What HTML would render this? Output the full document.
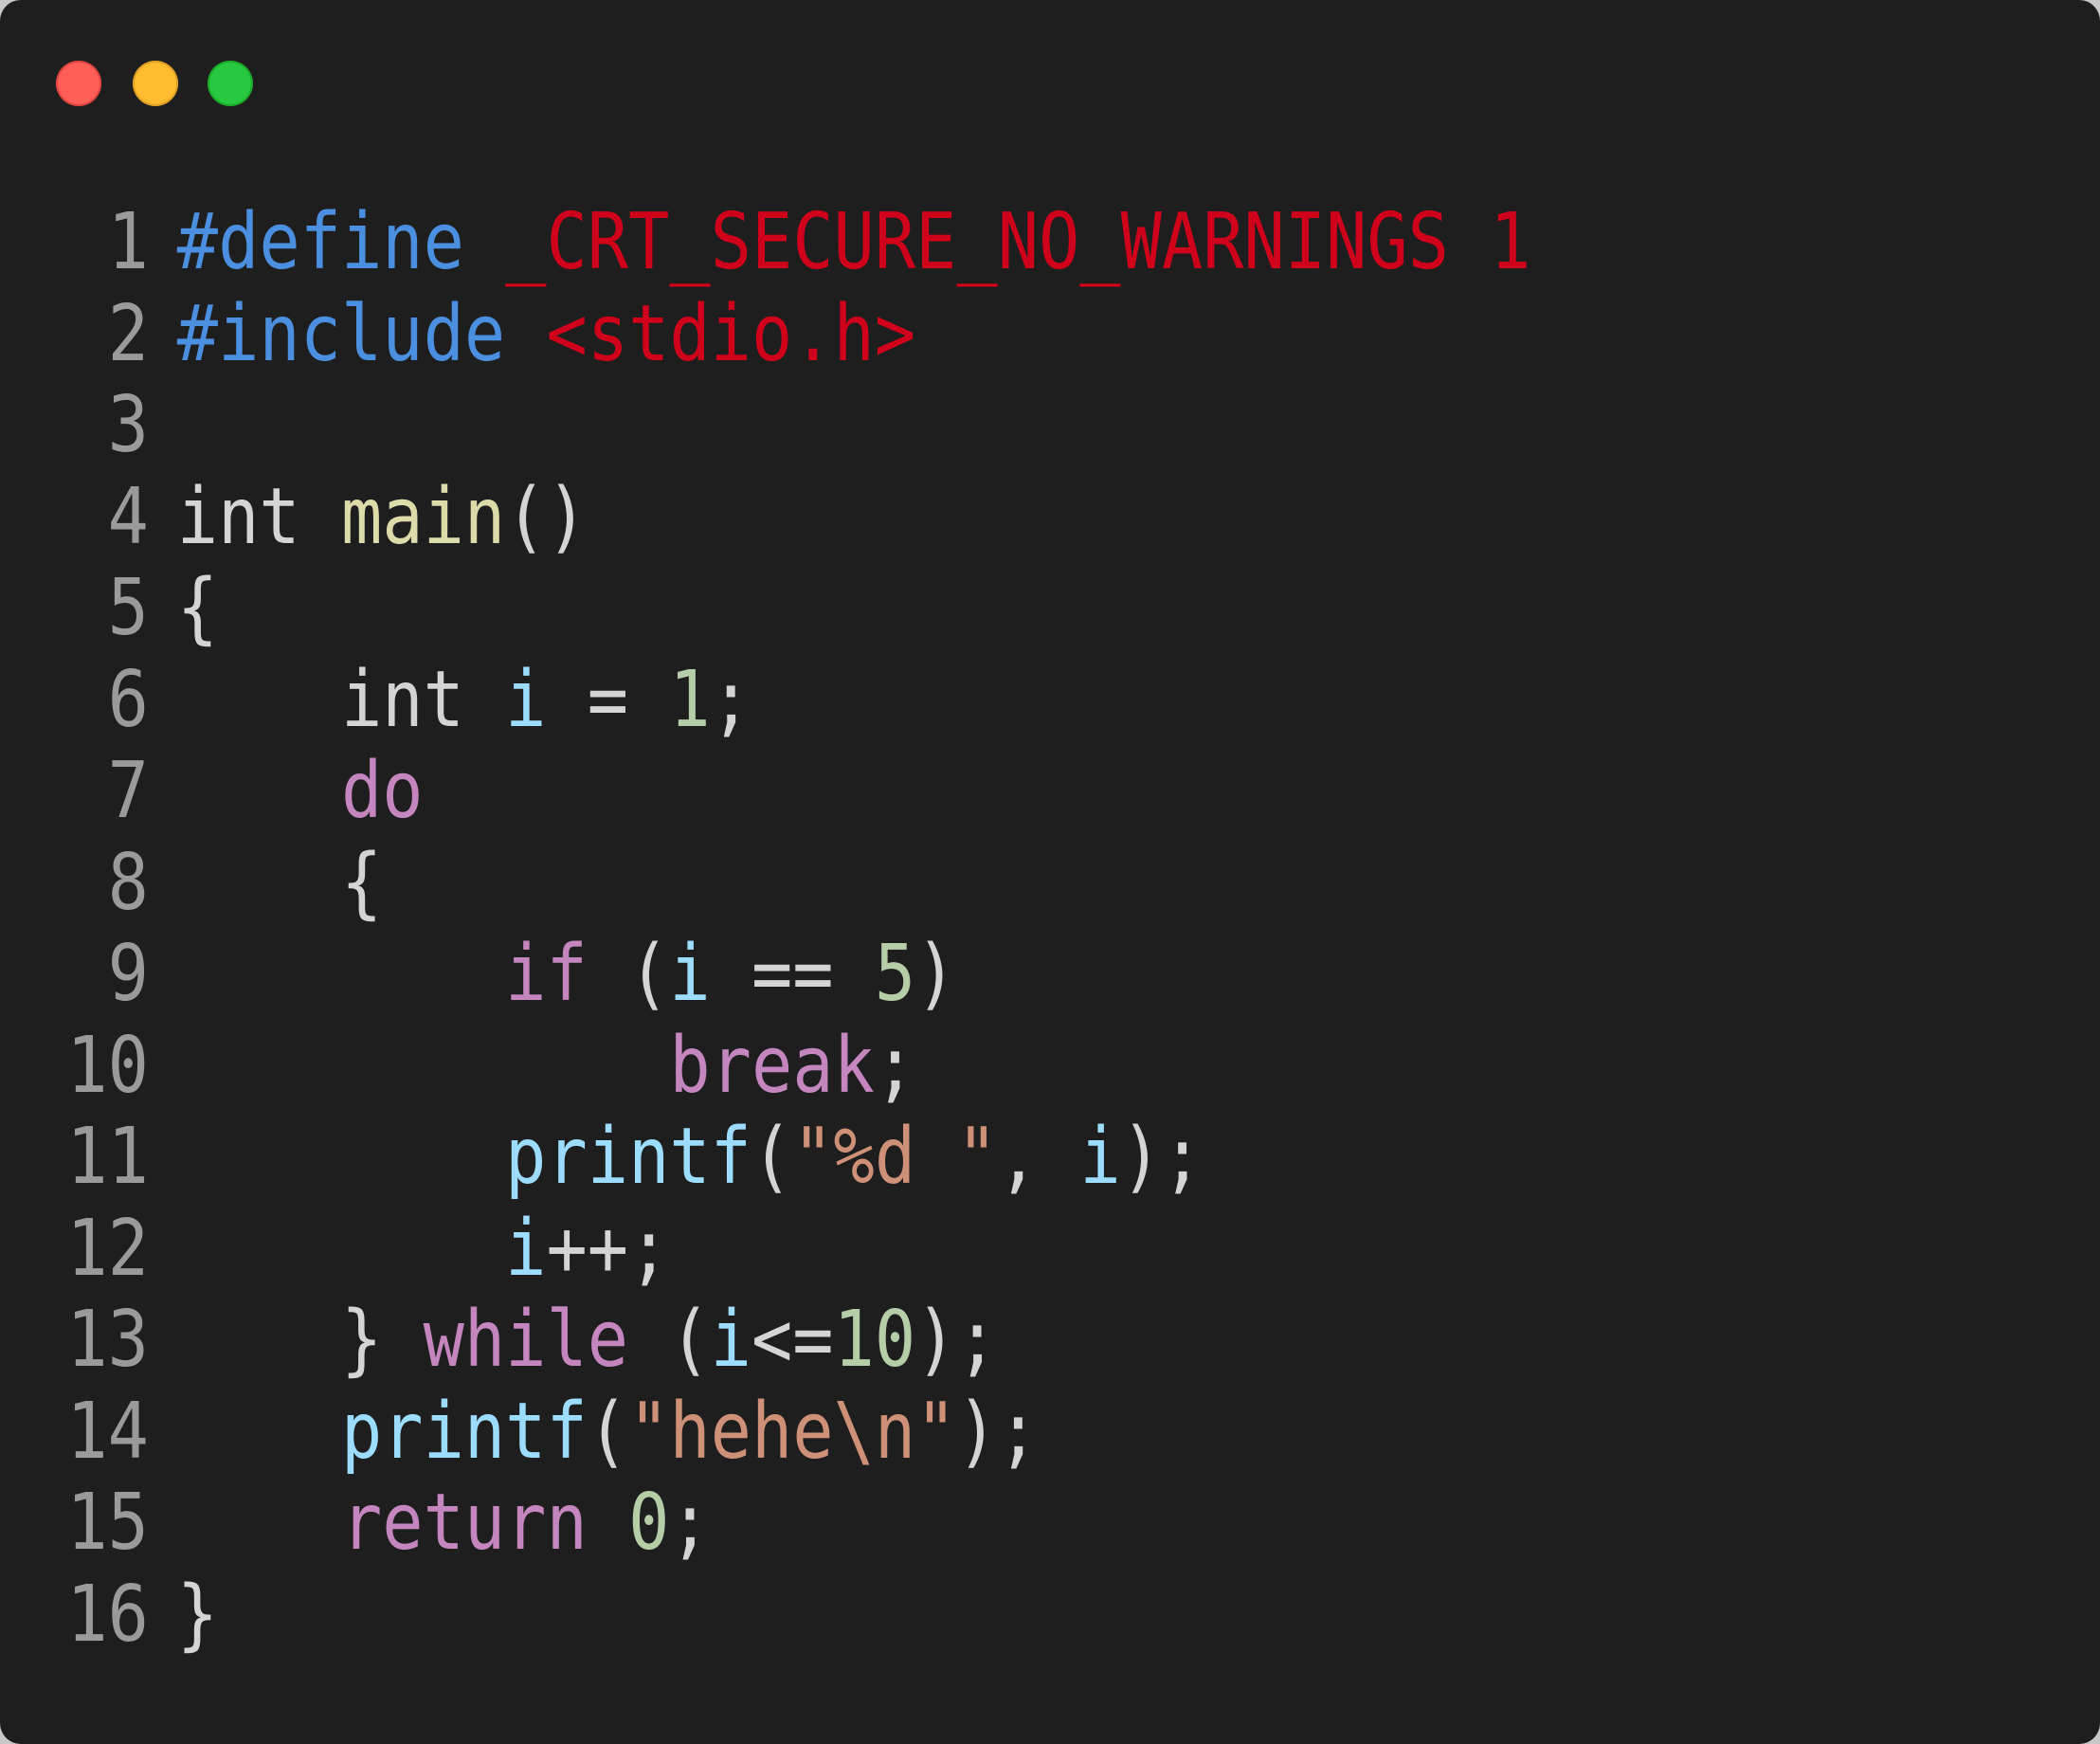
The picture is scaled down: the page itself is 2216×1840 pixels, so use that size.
<!DOCTYPE html>
<html><head><meta charset="utf-8"><style>
html,body{margin:0;padding:0;width:2216px;height:1840px;background:#c8c8c8;overflow:hidden}
.card{position:absolute;left:0;top:0;width:2216px;height:1840px;background:#1e1e1e;border-radius:22px}
.dot{position:absolute;top:64px;width:48px;height:48px;border-radius:50%}
.code{position:absolute;left:0;top:208px;transform:scaleX(0.877);transform-origin:0 0;font-family:"DejaVu Sans Mono","Liberation Mono",monospace;font-size:82px;line-height:96.5px;white-space:pre;color:#d4d4d4}
.ln{display:inline-block;width:179px;text-align:right;color:#9a9a9a;margin-right:34px}
.b{color:#4a8fe0}.r{color:#d0021b}.y{color:#dcdcaa}.c{color:#9cdcfe}.g{color:#b5cea8}.p{color:#c586c0}.s{color:#ce9178}
</style></head><body>
<div class="card">
<div class="dot" style="left:59px;background:#ff5f57;box-shadow:inset 0 0 0 2px #e0443e"></div>
<div class="dot" style="left:140px;background:#febc2e;box-shadow:inset 0 0 0 2px #dea123"></div>
<div class="dot" style="left:219px;background:#28c840;box-shadow:inset 0 0 0 2px #1aab29"></div>
<div class="code"><div><span class="ln">1</span><span class="b">#define</span> <span class="r">_CRT_SECURE_NO_WARNINGS 1</span></div><div><span class="ln">2</span><span class="b">#include</span> <span class="r">&lt;stdio.h&gt;</span></div><div><span class="ln">3</span></div><div><span class="ln">4</span>int <span class="y">main</span>()</div><div><span class="ln">5</span>{</div><div><span class="ln">6</span>    int <span class="c">i</span> = <span class="g">1</span>;</div><div><span class="ln">7</span>    <span class="p">do</span></div><div><span class="ln">8</span>    {</div><div><span class="ln">9</span>        <span class="p">if</span> (<span class="c">i</span> == <span class="g">5</span>)</div><div><span class="ln">10</span>            <span class="p">break</span>;</div><div><span class="ln">11</span>        <span class="c">printf</span>(<span class="s">"%d "</span>, <span class="c">i</span>);</div><div><span class="ln">12</span>        <span class="c">i</span>++;</div><div><span class="ln">13</span>    } <span class="p">while</span> (<span class="c">i</span>&lt;=<span class="g">10</span>);</div><div><span class="ln">14</span>    <span class="c">printf</span>(<span class="s">"hehe\n"</span>);</div><div><span class="ln">15</span>    <span class="p">return</span> <span class="g">0</span>;</div><div><span class="ln">16</span>}</div></div>
</div>
</body></html>
